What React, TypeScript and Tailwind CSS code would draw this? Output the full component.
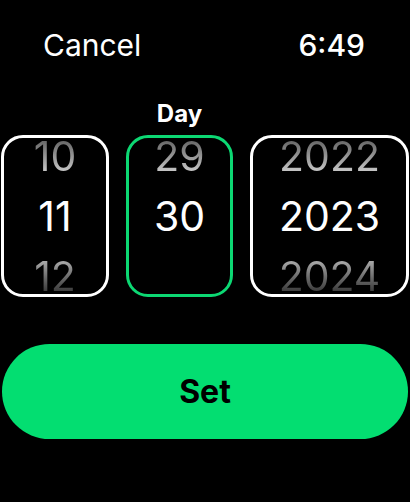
import React from "react";

type Col = { label?: string; top: string; mid: string; bottom?: string; active?: boolean; width: string };

const cols: Col[] = [
  { top: "10", mid: "11", bottom: "12", width: "w-[108px]" },
  { label: "Day", top: "29", mid: "30", active: true, width: "w-[107px]" },
  { top: "2022", mid: "2023", bottom: "2024", width: "w-[159px]" },
];

function Wheel({ col }: { col: Col }) {
  return (
    <div className={`${col.width} flex flex-col`}>
      <div className="h-[33px] text-center text-[24px] leading-[24px] font-bold">{col.label}</div>
      <div
        className={`h-[162px] rounded-[22px] border-[3px] overflow-hidden flex flex-col items-center justify-center text-[41px] leading-none ${
          col.active ? "border-[#0cd873]" : "border-white"
        }`}
      >
        <div className="h-[60px] shrink-0 flex items-center justify-center">
          <span className="bg-linear-to-b from-[#5a5a5a] to-[#d8d8d8] bg-clip-text text-transparent">{col.top}</span>
        </div>
        <div className="h-[60px] shrink-0 flex items-center justify-center text-white">{col.mid}</div>
        <div className="h-[60px] shrink-0 flex items-center justify-center">
          {col.bottom && (
            <span className="bg-linear-to-b from-[#bdbdbd] to-[#2a2a2a] bg-clip-text text-transparent">{col.bottom}</span>
          )}
        </div>
      </div>
    </div>
  );
}

export default function App() {
  return (
    <div
      className="w-[410px] h-[502px] bg-black text-white overflow-hidden"
      style={{ fontFamily: "Inter, 'Noto Sans', sans-serif" }}
    >
      <div className="flex items-center justify-between pt-[27px] pl-[43px] pr-[45px] text-[30px] leading-[36px]">
        <span>Cancel</span>
        <span className="font-medium">6:49</span>
      </div>

      <div className="mt-[39px] flex gap-[17px] pl-[1px]">
        {cols.map((c, i) => (
          <Wheel key={i} col={c} />
        ))}
      </div>

      <button className="mt-[47px] mx-[2px] w-[406px] h-[95px] rounded-full bg-[#03de71] text-black text-[32px] font-bold flex items-center justify-center">
        Set
      </button>
    </div>
  );
}
